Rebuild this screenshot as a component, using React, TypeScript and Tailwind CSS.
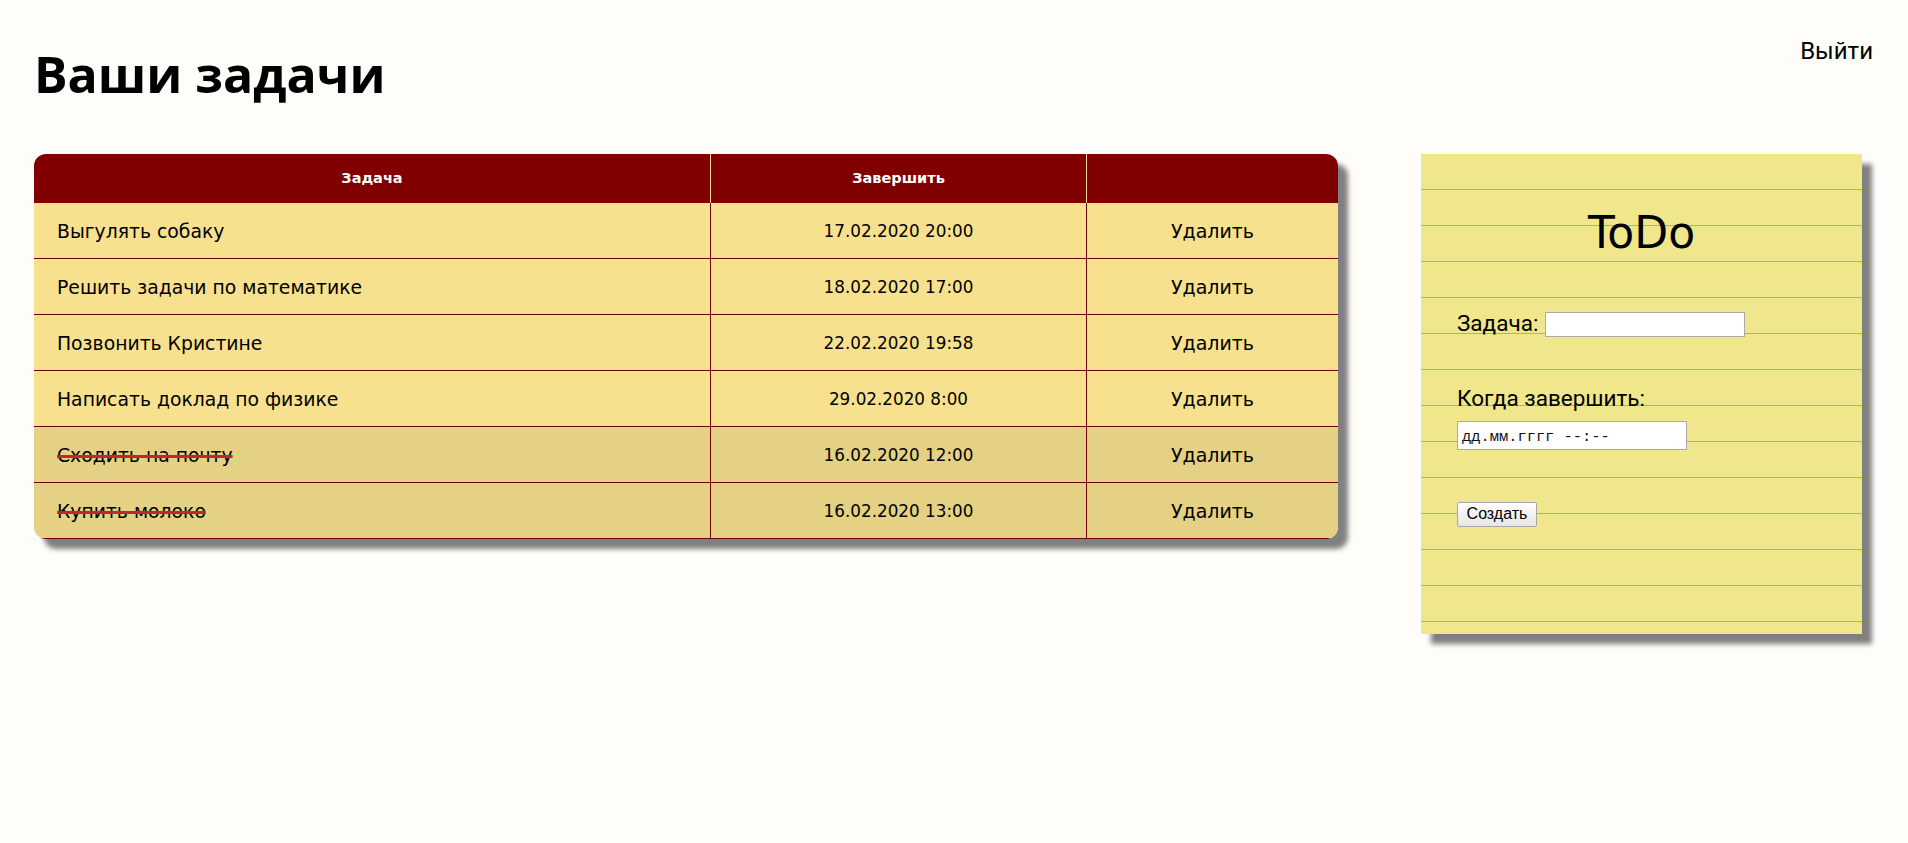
import React from "react";

type Task = { title: string; due: string; done: boolean };

const tasks: Task[] = [
  { title: "Выгулять собаку", due: "17.02.2020 20:00", done: false },
  { title: "Решить задачи по математике", due: "18.02.2020 17:00", done: false },
  { title: "Позвонить Кристине", due: "22.02.2020 19:58", done: false },
  { title: "Написать доклад по физике", due: "29.02.2020 8:00", done: false },
  { title: "Сходить на почту", due: "16.02.2020 12:00", done: true },
  { title: "Купить молоко", due: "16.02.2020 13:00", done: true },
];

export default function App() {
  return (
    <div className="min-h-screen bg-[#fefdfa] pl-[34px] pr-[35px] pt-[37px] text-black">
      <div className="flex items-start justify-between">
        <h1 className="mt-[7px] font-['Open_Sans',sans-serif] text-[50px] font-bold leading-[61px]">
          Ваши задачи
        </h1>
        <a className="cursor-pointer font-['Roboto',sans-serif] text-[24px] leading-[28px]">Выйти</a>
      </div>

      <div className="mt-[49px] flex items-start gap-[83px]">
        {/* Task table */}
        <div className="w-[1304px] overflow-hidden rounded-[12px] shadow-[10px_10px_5px_#808080]">
          <div className="grid h-[49px] grid-cols-[676px_376px_252px] bg-[#800000] font-['DejaVu_Sans',sans-serif] text-[14.5px] font-bold text-white">
            <div className="flex items-center justify-center pt-[1px]">Задача</div>
            <div className="flex items-center justify-center border-l border-[#f7e18e] pt-[1px]">Завершить</div>
            <div className="border-l border-[#f7e18e]" />
          </div>
          {tasks.map((t, i) => (
            <div
              key={i}
              className={`grid h-[56px] grid-cols-[676px_376px_252px] border-b border-[#6e0000] font-['DejaVu_Sans',sans-serif] ${
                t.done ? "bg-[#e5d184]" : "bg-[#f7e18e]"
              }`}
            >
              <div className="flex items-center pl-[23px] pt-[3px] text-[18.8px]">
                <span
                  className={
                    t.done ? "line-through decoration-[#c0282a] decoration-[3px]" : ""
                  }
                >
                  {t.title}
                </span>
              </div>
              <div className="flex items-center justify-center border-l border-[#6e0000] pt-[2px] text-[16.8px]">
                {t.due}
              </div>
              <div className="flex cursor-pointer items-center justify-center border-l border-[#6e0000] pt-[2px] text-[19px]">
                Удалить
              </div>
            </div>
          ))}
        </div>

        {/* ToDo form panel */}
        <div className="flex h-[480px] w-[441px] flex-col bg-[#f0e68c] bg-[repeating-linear-gradient(to_bottom,transparent_0px,transparent_35px,#aaaaaa_35px,#aaaaaa_36px)] px-[36px] pt-[53px] shadow-[10px_10px_5px_#808080]">
          <div className="text-center font-['DejaVu_Sans',sans-serif] text-[44px] leading-[51px]">ToDo</div>
          <div className="mt-[52px] flex items-start gap-[7px]">
            <span className="font-['Roboto',sans-serif] text-[22.5px] leading-[27px]">Задача:</span>
            <input
              type="text"
              className="mt-[2px] h-[25px] w-[200px] border border-[#a9a9a9] bg-white px-1 font-['Liberation_Sans',sans-serif] text-[13px] outline-none"
            />
          </div>
          <div className="mt-[48px] font-['Roboto',sans-serif] text-[22.5px] leading-[27px]">Когда завершить:</div>
          <div className="mt-[9px] flex h-[29px] w-[230px] items-center border border-[#a9a9a9] bg-white pl-[4px] pt-[4px] font-['Liberation_Mono',monospace] text-[15.4px] text-[#111]">
            дд.мм.гггг --:--
          </div>
          <div className="mt-[51px]">
            <button className="h-[25px] w-[80px] rounded-[2px] border border-[#a6a6a6] bg-gradient-to-b from-[#ffffff] to-[#e6e6e6] font-['Liberation_Sans',sans-serif] text-[16px] leading-none text-black">
              Создать
            </button>
          </div>
        </div>
      </div>
    </div>
  );
}
